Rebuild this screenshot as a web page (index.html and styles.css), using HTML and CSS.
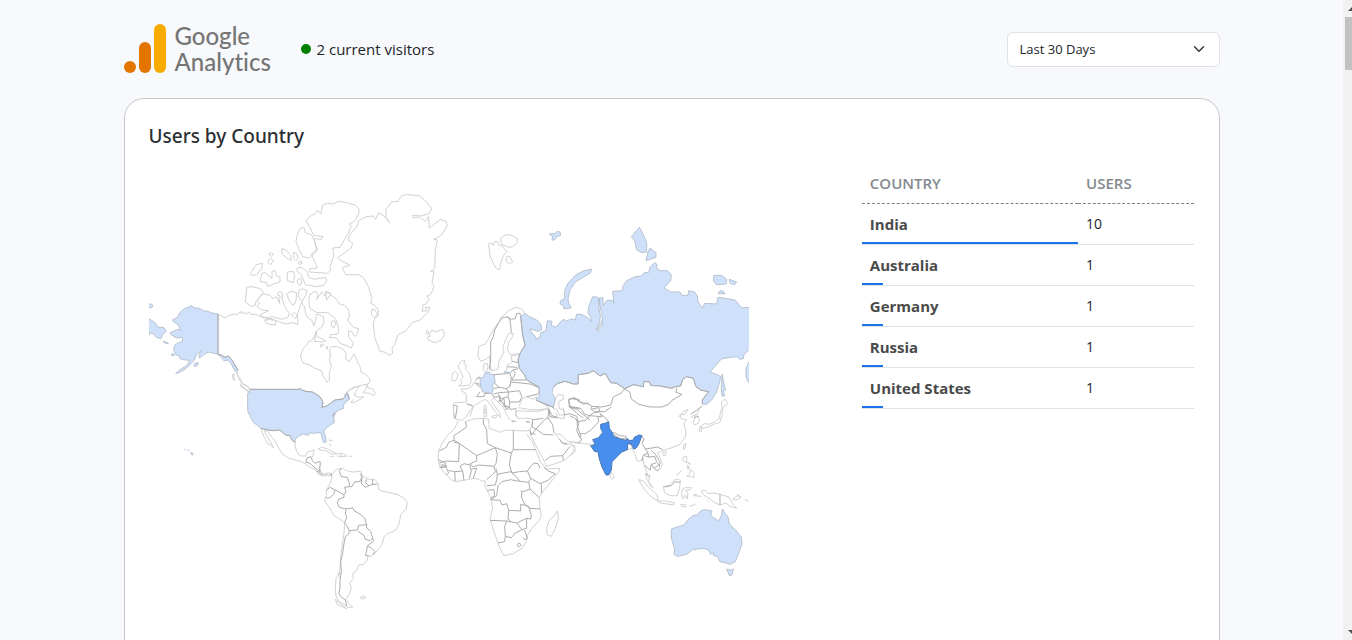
FILE: index.html
```html
<!DOCTYPE html>
<html lang="en">
<head>
<meta charset="utf-8">
<title>Google Analytics</title>
<meta name="viewport" content="width=device-width, initial-scale=1">
<link rel="stylesheet" href="styles.css">
</head>
<body>
<div class="viewport">
  <div class="page">
    <header class="topbar">
      <div class="brand">
        <svg class="brand-mark" viewBox="0 0 43 50" aria-hidden="true">
          <rect x="30" y="0" width="12" height="49" rx="6" fill="#f9ab00"/>
          <rect x="15" y="18" width="12" height="31" rx="6" fill="#e37400"/>
          <circle cx="6" cy="43" r="6" fill="#e37400"/>
        </svg>
        <div class="brand-name"><span>Google</span><span>Analytics</span></div>
      </div>
      <p class="visitors"><span class="dot"></span>2 current visitors</p>
      <div class="range">
        <select class="range-select" aria-label="Date range">
          <option>Last 30 Days</option>
        </select>
        <svg class="range-arrow" viewBox="0 0 16 16" aria-hidden="true"><path d="m2 5 6 6 6-6" fill="none" stroke="#343a40" stroke-width="2" stroke-linecap="round" stroke-linejoin="round"/></svg>
      </div>
    </header>

    <main class="card">
      <h1 class="card-title">Users by Country</h1>
      <div class="columns">
        <svg class="map" viewBox="149 163 600 490" role="img" aria-label="World map of users by country">
          <!-- Alaska, Bering Sea, Hawaii -->
          <g transform="translate(145 290) scale(.33333)">
            <path class="low" d="M219 72V193L207 190 190 186 180 192 172 198 163 204V192L168 183 160 188 152 198 150 206 145 214 135 224 122 236 108 245 92 251 104 240 120 230 130 220 133 210 120 210 105 206 104 198 92 194 86 180 90 165 100 158 113 154 112 142 95 144 78 134 76 128 84 124 100 118 108 122 100 105 84 94 82 90 98 82 104 68 118 56 130 52 138 47 150 54 160 54 175 62 190 64 200 69Z"/>
            <path class="low" d="M219 193 228 194 240 202 250 198 262 212 270 226 279 240 274 247 266 236 258 220 248 210 238 213 228 202ZM0 74 12 86 30 98 40 112 56 112 64 124 54 132 48 146 34 142 26 132 14 128 12 136 0 140ZM0 43 20 42 24 48 18 54 0 56ZM54 154 68 158 70 162 58 158ZM150 220 160 218 158 225 150 230 146 226ZM78 192 86 192 88 197 80 196ZM138 487 145 491 142 496 138 492ZM118 477l4 2M127 479l7 5"/>
            <path class="coast" d="M219 72 228 78 240 84 252 76 268 72 276 74 288 64 290 72 296 66 304 72 312 66 318 74 330 72 345 80 360 82 380 88M275 247 280 260 288 268 290 280 300 284 315 296 320 306 318 314 310 306 300 298 288 290 286 284M262 254 268 252 266 264 271 271 264 268Z"/>
            <path class="edge" d="M219 72V193L228 195 240 202 250 198 262 212 279 240"/>
          </g>
          <!-- Arctic Canada, Greenland, Iceland -->
          <g transform="translate(240 190) scale(.33333)">
            <path class="coast" d="M75 388 95 386 110 392 125 398 140 402 160 398 174 404 172 375 180 350 185 335 188 345 194 350 196 368 205 385 215 390 222 408 226 392 230 372 240 375 250 380 252 398 245 412 230 422 225 435 215 452 205 455 200 465 190 475 182 495 184 508 190 520 210 525 225 535 245 543 250 560 262 578 268 570 268 545 275 530 268 510 272 495 268 480 275 470 290 470 310 478 318 490 318 508 328 515 342 492 352 515 360 530 362 545 380 555 388 566 390 575 385 582 365 586 345 592 325 602 318 614"/>
            <path class="coast" d="M248 45 262 40 280 42 296 34 320 38 345 45 356 56 357 70 345 92 327 102 334 106 325 130 308 158 300 172 278 174 282 195 270 232 272 240 262 250 208 246 210 236 232 234 228 224 216 198 232 178 220 146 244 148 249 140 222 136 198 92 215 76 226 72 232 60 242 72ZM182 114 192 112 196 128 214 134 224 152 230 180 220 186 208 204 188 200 176 176 168 152 174 128ZM125 176 138 180 152 196 154 212 140 204 126 192ZM160 188 170 190 175 206 168 212 162 206ZM86 192 94 188 100 192 94 200ZM84 212 92 205 100 212 92 224 84 218ZM174 218l9-6 4 8-8 3ZM48 224 67 220 66 234 50 254 34 256 32 250ZM66 250 76 248 96 266 96 244 106 242 108 256 120 262 120 276 100 282 84 290 80 278 60 274ZM142 246 160 244 164 256 160 278 142 272ZM172 234 184 232 200 242 206 262 224 268 256 262 260 272 252 286 230 290 196 284 184 254 170 242ZM172 270 182 264 186 276 180 286 172 280ZM20 292 36 290 62 296 70 308 48 334 46 346 34 350 16 336 18 318ZM60 320 70 312 90 316 98 326 110 320 118 340 120 318 112 314 118 304 128 310 126 324 134 350 148 370 144 382 124 388 98 380 72 384 60 374 86 362 64 360 52 350 58 340 52 332ZM140 312 152 304 170 308 168 332 160 346 148 334ZM176 302 188 296 202 302 196 318 186 334 176 322ZM74 392 88 388 108 392 106 406 78 400ZM154 374l10-6 8 8-6 10Z"/>
            <path class="coast" d="M210 312 228 304 234 316 230 328 246 306 254 318 262 306 276 318 290 328 298 342 314 346 326 360 328 380 322 390 340 412 356 416 352 430 344 440 334 424 326 422 326 440 340 460 334 474 318 466 300 460 290 444 268 442 272 434 294 432 296 416 288 388 264 368 232 368 210 356 206 332ZM256 304l18 6-14 20ZM275 394l9-2 4 10-8 12-6-8ZM228 424 232 440 258 452 246 456 224 454ZM240 465l8-3 3 4-9 5ZM258 470l5 0-1 8Z"/>
            <path class="coast" d="M449 98 438 82 438 58 456 36 474 34 484 18 500 13 540 18 562 38 575 56 568 70 546 78 518 76 518 82 538 82 556 94 566 80 568 114 602 88 618 94 622 106 604 136 582 148 592 150 586 180 584 234 572 244 582 244 576 280 582 290 572 314 560 318 568 328 558 342 550 344 546 364 562 362 556 352 570 352 564 368 540 390 516 398 498 422 474 434 464 464 456 474 458 490 450 496 432 486 420 484 404 442 400 404 404 386 414 378 416 360 402 344 392 340 396 326 386 292 370 262 356 254 318 254 306 234 330 226 300 210 294 202 312 190 334 174 338 160 324 150 330 134 352 108 356 92 378 80 400 78 406 88 416 68 432 78ZM396 358l10 2 6 14-8 10-10-10ZM562 420 568 432 576 420 588 426 608 418 614 434 604 450 586 458 564 450 562 442 572 438 558 430Z"/>
          </g>
          <!-- United States, Mexico, Central America -->
          <g transform="translate(235 370) scale(.33333)">
            <path class="low" d="M44 58H192L196 55 200 60 212 64 232 66 246 74 258 84 264 98 260 112 275 108 284 102 290 97 300 90 324 87 330 80 332 72 338 71 341 80 343 88 330 98 324 108 326 115 312 120 304 126 296 140 298 158 284 166 270 178 266 186 272 200 274 216 266 218 262 208 260 192 252 188 236 190 224 188 220 196 205 192 192 198 182 206 180 216 172 212 164 196 152 196 146 190 134 180 116 182 98 180 90 176 78 176 70 168 56 158 44 136 38 122 38 72Z"/>
            <path class="edge" d="M44 58H192L196 55 200 60 212 64 232 66 246 74 258 84 264 98 260 112 275 108 284 102 290 97 300 90 324 87 330 80 332 72 338 71 343 88M78 176 98 180 116 182 134 180 146 190 152 196 164 196 172 212 180 216M298 128l-5 10 4 2M212 278l4-14 12-4 4 12 8 8 14-6 4 6-6 14 4 12-6-4-16-14-10-8-10-4M258 308l2 8"/>
            <path class="coast" d="M0 0 6 8 10 22 16 34 24 44 38 48 44 60 46 70 34 58 20 48 17 42M78 178 86 198 92 208 98 222 106 224 116 234 110 222 102 208 92 192 88 182 96 182 108 198 118 210 132 234 140 250 160 264 180 270 196 274 208 280 226 292 240 298 250 312 262 318 276 316 288 316M182 206 180 228 186 246 196 258 212 258 218 246 238 240 234 256 230 264 M254 274 256 300 264 314 280 308 290 316M250 236 262 232 280 238 296 246 306 252 290 252 272 242 252 240ZM308 250 322 250 336 258 318 260 306 258M318 250v9M284 259h12M342 259h10M280 210l12 2M284 220l4 8M330 74 340 62 354 52 372 48 368 58 362 64 358 76 370 82 386 80 376 88 356 98 348 98 354 88M384 68 392 58 396 44 400 54 414 58 420 68 416 76 404 70Z"/>
          </g>
          <!-- South America -->
          <g transform="translate(300 430) scale(.33333)">
            <path class="coast" d="M62 134 76 132 88 138 94 130 96 142 90 160 84 172 78 184 80 196 74 206 76 216 88 232 102 256 120 268 134 278 132 310 126 350 122 380 120 410 116 438 108 444 106 478 108 498 116 514 130 522 146 532 158 532 150 524 138 508 148 492 154 470 148 460 160 446 158 430 170 422 176 406 192 402 202 390 204 378 214 378 226 368 246 344 252 320 262 312 288 300 298 280 302 254 318 238 322 218 314 206 294 194 270 188 248 184 236 178 234 160 224 148 206 148 188 138 182 124 160 126 140 122 130 116 116 116 104 122 98 132M112 436 118 428 122 438 118 444M106 508 120 520 140 536 112 524ZM180 502l10-3 8 3-6 4-10 0"/>
            <path class="edge" d="M124 114 118 124 124 140 142 142 148 160 148 170 156 170 164 156 180 154 186 140 180 130M186 140 184 160 196 172 214 164 232 162M200 148 196 158 206 166M218 148v18M148 170 134 172 138 186 132 194 106 180 90 172 80 182M106 180 100 194 88 204 78 204M132 194 132 202 116 208 112 220 118 232 134 236 150 236 158 232 162 242 180 252 194 264 200 284 176 286 172 300 148 302 140 286 134 278 140 262 136 250 138 238M200 284 200 294 212 304 218 324 210 332 196 328 192 316 174 304M218 324 220 334 202 348 200 362 196 376 206 378M202 348 214 354 224 364 220 374M148 302 146 312 136 320 132 340 128 370 122 396 124 424 120 450 120 476 116 490 122 500 136 510 140 528"/>
            <path class="edge" d="M50 122 62 132M92 128l4 10"/>
          </g>
          <!-- Europe -->
          <g transform="translate(430 220) scale(.33333)">
            <path class="coast" d="M176 72 184 68 190 76 194 64 204 66 208 78 216 76 222 86 232 94 222 104 214 122 208 150 198 144 190 130 180 108ZM212 54 224 46 240 44 262 56 262 68 248 80 236 82 214 72ZM232 108l8 2 8 16-10 6-10-8ZM284 282 278 268 258 262 236 272 216 290 206 308 192 326 174 358 166 372 146 380 144 408 152 424 168 418 178 408 180 430 184 452 204 448 206 426 222 396 218 380 236 340 250 340 248 350 236 366 232 390 242 404 268 400M244 408 270 404M244 408 246 424 240 432 232 434 230 448 222 458M162 432 172 430 174 442 168 458 160 450ZM178 448h6v6M96 422 104 420 102 432 110 436 106 446 118 460 124 484 118 496 86 498 96 488 92 478 100 470 88 448 84 436ZM66 462 76 454 84 460 82 472 78 482 66 482ZM150 466 138 480 124 500 108 508 94 506 96 514 108 520 110 546 80 548 70 550 70 570 74 596M110 552 130 560 120 590M130 560 150 546 164 538 174 544 184 558 200 580 212 594 208 578 190 552 184 542 190 534 204 546 220 562 230 584 240 600M162 556l6 0 2 22-8 2ZM268 558 276 538 290 530 308 538 320 530 318 540 346 554 356 566 324 574 296 574 260 572 256 586 268 596M400 526 384 524 376 536 370 562M400 526 400 538 386 544 388 566 402 570 404 594 388 596 376 578"/>
            <path class="edge" d="M178 448 182 420 182 366 190 350 194 330 206 308 216 294 232 290 240 300 244 338M232 290 244 298 256 296 260 280 270 280 272 292M70 556 82 558 76 596M110 552 128 556M138 478 150 472M136 490 148 500 156 502M150 516 140 530 162 530 164 520 186 520M186 490 196 492 208 502 188 506M208 502 228 506 240 500 244 474 240 460 192 464M240 460 248 450 264 446M232 440 262 442M246 424 266 428M248 450 256 460 246 480 288 480M240 500 242 486 300 492 328 504 326 522 290 530 M228 506 236 516 206 518 190 522M186 522 192 532 208 530 214 536 234 530 236 516 268 512 276 530 268 546 240 546 234 530M208 530 212 544 222 536 224 556 236 562 240 546M224 556 230 570 238 560 240 568 260 566M356 566 360 590 384 594M346 554 366 560 374 568M416 538 434 534 448 546 476 552M416 538 418 562 440 568 480 600"/>
            <path class="low" d="M164 460 178 456 180 462 192 464 196 488 186 494 190 506 186 520 158 516 152 500 150 474 160 472ZM222 458 230 454 240 460Z"/>
          </g>
          <!-- Russia and its islands -->
          <g transform="translate(560 220) scale(.33333)">
            <path class="low" d="M-118 290-105 280-92 290-70 300-58 312-54 328-66 334-90 326-84 340-76 346-72 358-60 350-58 338-42 332-38 302-24 304-26 316-12 322 5 302 12 298 18 304 35 296 46 300 50 282 66 284 82 292 95 306 92 292 84 280 86 260 98 230 115 232 116 262 122 290 118 312 108 328 114 333 126 318 128 296 120 275 118 235 128 232 130 258 140 242 156 240 162 250 158 214 188 212 188 200 200 182 225 170 245 168 252 158 266 158 270 142 284 128 292 134 288 144 300 152 322 152 334 165 332 182 312 204 332 216 360 216 366 226 384 226 386 212 404 216 412 228 414 246 428 264 434 250 470 252 474 232 490 234 525 240 545 263 580 262V384L567 388 552 404 550 416 538 418 530 410 485 416 450 456 465 462 476 466 482 470 478 490 470 515 455 540 440 553 427 552V540L446 515 422 510 408 500 400 475 380 470 368 478 362 498 345 500 335 505 300 498 272 496 268 486 252 484 250 500 220 494 194 506 170 490 152 488 136 460 120 468 100 452 85 460 55 464 54 492 40 492 15 484-6 490-20 500-24 520-14 535-20 562-45 552-72 540-60 525-62 502-100 480-106 465-122 445-126 420-120 400-105 375-112 345Z"/>
            <path class="gap" d="M118 235 120 260 126 282 127 300 120 318 112 329 119 308 121 286 116 262Z"/>
            <path class="low" d="M94 148 92 158 70 172 46 186 30 210 24 236 26 250 34 264 12 266 10 256 0 252 2 242 14 236 14 212 24 190 48 164 72 152ZM238 22 248 40 260 68V96L246 98 230 90 224 62 214 50ZM270 84 288 98V112L258 122 264 96ZM462 166 485 166 500 178 498 192 470 194 460 184ZM508 178 530 186 524 194 510 190ZM474 220 480 212 490 214 494 222ZM486 462 492 490 497 510 490 512 494 528 486 528 484 505ZM580 422 567 425 558 445V470L567 490 580 494ZM-32 42-14 40-8 34 0 36 2 46-10 50-16 60-24 60-22 50Z"/>
            <path class="edge" d="M427 552V540L446 515 422 510 408 500 400 475 380 470 368 478 362 498 345 500 335 505 300 498 272 496 268 486 252 484 250 500 220 494 194 506 170 490 152 488 136 460 120 468 100 452 85 460 55 464 54 492 40 492 15 484-6 490-20 500M-20 562-45 552-72 540M-62 502-100 480-106 465-122 445-126 420-120 400-105 375-112 345-118 290"/>
          </g>
          <!-- Africa and the Middle East -->
          <g transform="translate(430 365) scale(.33333)">
            <path class="coast" d="M70 122 72 160 84 164 96 166 108 156 122 134 130 124M84 168 74 190 50 214 34 240 26 258 24 284 28 300 38 318 52 332 66 346 76 350 100 346 122 342 138 340 156 348 166 348 164 362 172 376 182 398 188 430 180 462 192 500 204 534 214 558 222 572 250 566 276 550 290 528 292 512 304 492 328 466 334 452 330 432 328 398 340 378 362 352 388 318 388 310 346 312 340 300 330 288 320 262 308 232 290 208M106 170 130 162 160 160 176 162 178 190 190 194 210 202 224 196 250 196 280 198 300 196 306 180 308 162 290 160 264 160 258 148 256 134M188 152 202 152 196 160 184 156ZM246 170h14M290 172h10M162 134l6 0 2 20-8 0ZM300 208 308 222 322 250 344 290 350 304 376 296 404 286 428 262 436 244 418 236 404 240 384 218 374 206M374 206 392 208 412 228 450 236M382 438 386 458 376 490 364 514 352 510 350 490 358 466 372 454ZM378 130 388 150 402 150 400 128M266 128 300 134 330 134 356 130"/>
            <path class="edge" d="M106 170 110 186 84 204 72 212 72 226 86 234 140 272 140 288M72 226 56 232 50 246 28 258M72 232 88 234 86 290 50 288 40 290 24 284M140 272 196 248 172 236 170 194 160 176 160 160M250 196V254H316M250 254 244 264 196 248M244 264 238 300 246 324M196 248 202 268 198 296 192 304 146 300 130 306 120 296 140 288M192 304 196 320 184 332 170 344M198 310 202 328 242 320 262 338M246 324 268 320 292 318 304 302 312 294 324 296 330 310M292 318 302 340 296 352M302 340 330 356 354 346 376 326 354 318 344 306M334 356V384M296 352 262 348 242 344 216 350 204 362 200 392 182 404M296 352 300 372 280 380 272 378M262 338 268 348M202 328 200 344 196 360 170 362M172 376 192 374 194 392 182 400M276 380 274 396 284 418 300 430 330 432M300 372 328 398M182 404 210 406 216 420 230 416 236 436 272 438 272 418 296 424 304 450 302 462 290 460 260 474 230 468 180 466M236 436 234 462 242 468M260 474 276 494 290 490 290 460M276 494 256 504 244 518 226 514 224 484 230 468M226 514 224 530 204 534M284 496 292 520 284 524 280 518M262 538l6-4 6 6-6 6-6-4ZM28 294 44 290 50 306 28 308M44 300 50 310 56 324 48 330M56 316 74 320 76 348M74 320 98 318 102 346M98 318 90 304 102 296 120 300 124 318 118 340M124 312 140 310 130 340M300 196 304 210 318 192 344 164 354 158 356 132M318 192 306 186 308 164 340 160M318 192 340 208 370 210M354 158 368 180 372 204M356 132 366 152 380 156M402 150 420 146 440 154 446 176 440 196 450 218M316 208 300 204M346 286 362 274 398 272 420 244M398 272 400 286M388 222 396 234 412 236M416 104 420 124 450 132M416 104 432 98 450 106"/>
            <path class="edge" d="M136 54 150 58M204 86 212 100 206 108 220 114 222 124 232 126M32 300h12M34 304h10M288 170h10M244 168h10"/>
          </g>
          <!-- South and East Asia, Oceania -->
          <g transform="translate(570 365) scale(.33333)">
            <path class="coast" d="M0 230 24 232 40 236 64 238M0 232 14 250 16 258 2 272M124 322 130 328 132 338 126 342 120 334ZM172 254 184 250 190 256 196 270 202 288 212 288 218 278 222 298 230 322 236 334 240 330 236 350 250 368 240 362 230 340 226 326M262 318 272 308 278 298 270 278 262 264 280 256 306 248 330 238 346 216 348 200 342 176 350 164 334 162 330 150 344 148 354 134 342 138 326 156M362 158 376 148 370 174 374 180 386 174 388 160 380 150 388 130 398 122M278 262l10-2 0 10-8 2ZM342 238l6-4-2 14-6 6ZM390 186 404 176 418 178 432 172 448 160 452 138 456 130 454 112 464 102 474 116 462 124 458 132 456 150 450 172 436 176 420 184 398 190ZM388 188l8-2-2 14-6-2ZM206 344 220 348 240 372 262 390 264 408 244 396 222 372ZM262 408 286 408 314 414 312 420 270 414ZM330 418l20 2M332 424l18 2M358 424 376 418M280 364 296 362 318 342 332 346 328 372 322 392 300 392 284 384ZM338 372 346 368 364 368 362 374 346 376 354 384 352 402 346 390 340 402 334 386ZM340 276 350 274 350 290 362 298 346 290 338 286ZM320 332 334 316M352 306l8 2M352 300l6 8-4 6ZM362 314 372 322 372 338 362 334 350 334 360 326ZM370 392l24 2M370 388l12 2M412 404l4 6M394 378 406 376 414 386 430 384 450 388 476 396 488 416 500 430 480 424 468 414 450 420 430 410 418 400 400 390ZM488 402 504 392 512 398 498 406ZM500 388l14 8M524 402l12 8"/>
            <path class="edge" d="M164 71 154 84 130 96 122 120 96 126 66 124 62 132 74 140 104 140 124 126M66 132 86 128 90 140 70 144 58 152 42 146 32 130 10 126 0 128M0 100 22 104 40 118 52 114 66 124M58 152 84 154 86 170 64 194 46 206 30 206 22 184 22 170 48 166 58 152M84 154 96 156 90 146 108 160 116 172M0 152 18 162 22 172M30 206 34 226 24 234M0 126 20 144 40 160M164 71 180 82 184 102 206 118 240 126 276 126 296 118 306 106 336 88 318 82 320 68M124 206 150 220 168 222 168 214 150 212 130 202M188 250 184 240 170 232 174 226M214 212 222 222 216 236 226 252 240 250 262 246 278 254M216 288 220 270 234 264 226 252M234 264 236 276 254 274 260 290 266 300 252 310 244 298 258 294M244 256 256 268 270 290 268 306M244 298 240 316 224 300M252 310 262 318 270 310M236 276 224 272M284 366 304 362 314 350 330 352M450 388V420M362 148 380 136 396 124M372 158 386 154M226 326 236 334"/>
            <path class="low" d="M304 492 322 486 342 480 354 464 368 452 382 450 392 438 404 434 426 438 422 452 446 468 454 452 458 432 464 444 474 456 478 478 496 494 514 516 516 536 508 560 496 590 480 598 468 594 450 590 442 574 430 572 430 562 422 568 414 554 398 550 368 554 350 568 322 574 312 568 314 552 304 520ZM470 612 482 616 490 612 486 630 478 632Z"/>
            <path class="high" d="M92 178 108 174 116 170 118 190 128 204 130 214 150 222 168 226 172 220 176 226 188 226 194 216 208 210 216 212 212 222 206 238 198 250 190 252 188 240 174 234 172 254 154 262 140 276 126 290 124 316 116 330 108 330 96 306 88 282 84 260 74 260 62 242 76 238 68 224 86 218 98 202 92 190Z"/>
          </g>
        </svg>

        <table class="countries">
          <thead>
            <tr><th scope="col" class="c-name">Country</th><th scope="col">Users</th></tr>
          </thead>
          <tbody>
            <tr><th scope="row">India<span class="bar" style="width:100%"></span></th><td>10</td></tr>
            <tr><th scope="row">Australia<span class="bar" style="width:10%"></span></th><td>1</td></tr>
            <tr><th scope="row">Germany<span class="bar" style="width:10%"></span></th><td>1</td></tr>
            <tr><th scope="row">Russia<span class="bar" style="width:10%"></span></th><td>1</td></tr>
            <tr><th scope="row">United States<span class="bar" style="width:10%"></span></th><td>1</td></tr>
          </tbody>
        </table>
      </div>
    </main>
  </div>
  <div class="scrollbar" aria-hidden="true">
    <svg class="scroll-arrow" viewBox="0 0 4 4"><path d="M4 0V4H0Z" fill="#505050"/></svg>
    <div class="thumb"></div>
    <svg class="scroll-arrow" viewBox="0 0 4 4"><path d="M0 0H4V4Z" fill="#505050"/></svg>
  </div>
</div>
</body>
</html>
```
FILE: styles.css
```css
* { box-sizing: border-box; }

body {
  margin: 0;
  background: #f8f9fc;
  color: #212529;
  font: 15px/24px "Open Sans", "Noto Sans", sans-serif;
}

.viewport {
  display: grid;
  grid-template-columns: 1fr 9px;
  grid-template-rows: minmax(0, 1fr);
  height: 100vh;
  overflow: hidden;
}

.page {
  width: 100%;
  max-width: 1120px;
  margin: 0 auto;
  padding: 0 12px;
}

.topbar {
  display: flex;
  align-items: center;
  padding: 24px 0;
}

.brand {
  display: flex;
  align-items: center;
  gap: 8px;
  width: 145px;
  height: 50px;
}

.brand-mark { flex: none; width: 43px; height: 50px; }

.brand-name {
  color: #757575;
  font: 500 24px/26px Lato, sans-serif;
  font-variant-ligatures: none;
}

.brand-name span { display: block; }

.visitors {
  display: flex;
  align-items: center;
  gap: 6px;
  margin: 0 auto 0 32px;
}

.dot {
  width: 10px;
  height: 10px;
  border-radius: 50%;
  background: #008000;
}

.range {
  display: grid;
  align-items: center;
  width: 213px;
}

.range-select {
  grid-area: 1 / 1;
  appearance: none;
  width: 100%;
  height: 35px;
  padding: 0 12px;
  border: 1px solid #dee2e6;
  border-radius: 6px;
  background: #fff;
  color: #212529;
  font: 13px "Open Sans", "Noto Sans", sans-serif;
}

.range-arrow {
  grid-area: 1 / 1;
  justify-self: end;
  width: 12px;
  height: 12px;
  margin-right: 15px;
  pointer-events: none;
}

.card {
  padding: 25px 24px 24px;
  border: 1px solid #c4c7c9;
  border-radius: 20px;
  background: #fff;
}

.card-title {
  margin: 0 0 15px;
  color: #2b2f32;
  font-family: "Noto Sans", "Open Sans", sans-serif;
  font-size: 19px;
  font-weight: 500;
  line-height: 24px;
}

.columns {
  display: grid;
  grid-template-columns: 2fr 1fr;
  align-items: start;
  margin: 0 -12px;
}

.map {
  width: calc(100% - 24px);
  max-width: 600px;
  margin: 0 12px;
}

.map path {
  stroke-width: 1px;
  stroke-linejoin: round;
  vector-effect: non-scaling-stroke;
}

.coast { fill: none; stroke: #d2d2d2; }
.edge { fill: none; stroke: #acacac; }
.low { fill: #cfe1fa; stroke: #b8c3d1; }
.high { fill: #478eee; stroke: #4878b5; }
.gap { fill: #fff; stroke: #b8c3d1; }

.countries {
  width: calc(100% - 24px);
  margin: 0 12px;
  border-collapse: separate;
  border-spacing: 0;
  table-layout: fixed;
}

.c-name { width: 65%; }

.countries th,
.countries td {
  position: relative;
  padding: 8px;
  border-bottom: 1px solid #dee2e6;
  text-align: left;
}

.countries thead th {
  border-bottom: 1px dashed #808080;
  color: #84898e;
  font-size: 15px;
  font-weight: 600;
  text-transform: uppercase;
}

.countries tbody th {
  color: #4a4a4a;
  font-weight: 700;
}

.countries td { font-size: 14px; }

.bar {
  position: absolute;
  bottom: 0;
  left: 0;
  height: 2px;
  background: #1a73e8;
}

.scrollbar {
  display: flex;
  flex-direction: column;
  align-items: flex-end;
  gap: 6px;
  padding: 7px 0 6px 2px;
  background: #f1f1f1;
}

.thumb {
  width: 100%;
  height: 53px;
  margin-bottom: auto;
  background: #c1c1c1;
}

.scroll-arrow { flex: none; width: 4px; height: 4px; }
```
